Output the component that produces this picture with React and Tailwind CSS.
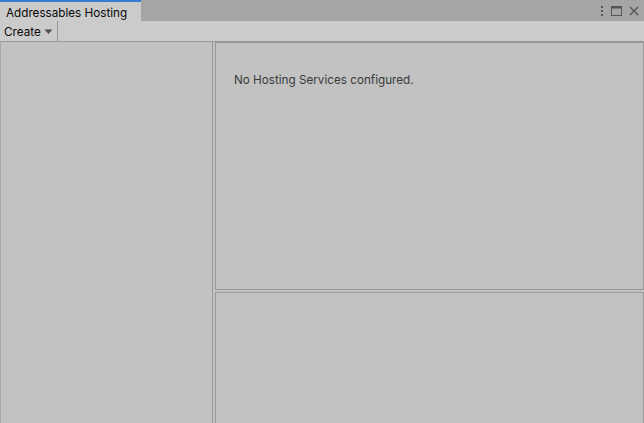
import React from "react";

export default function App() {
  return (
    <div
      className="w-[644px] h-[423px] flex flex-col bg-[#c2c2c2] overflow-hidden text-[11.7px]"
      style={{ fontFamily: "Inter, 'Noto Sans', sans-serif" }}
    >
      {/* Tab bar */}
      <div className="h-[21px] flex bg-[#a5a5a5] shrink-0">
        <div className="w-[141px] bg-[#cbcbcb] border-t-2 border-t-[#3a7cd2] flex items-center pl-[6px] text-[#090909] leading-none pt-[5px]">
          Addressables Hosting
        </div>
        <div className="flex-1" />
        <div className="flex items-center gap-[7px] pr-[5px] pt-[1px]">
          <svg width="4" height="12" viewBox="0 0 4 12">
            <rect x="1" y="1" width="2" height="2" fill="#555" />
            <rect x="1" y="5" width="2" height="2" fill="#555" />
            <rect x="1" y="9" width="2" height="2" fill="#555" />
          </svg>
          <svg width="11" height="10" viewBox="0 0 11 10">
            <rect x="0.5" y="0.5" width="10" height="9" fill="none" stroke="#555" />
            <rect x="0.5" y="0.5" width="10" height="2" fill="#555" />
          </svg>
          <svg width="10" height="10" viewBox="0 0 10 10">
            <path d="M1 1 L9 9 M9 1 L1 9" stroke="#555" strokeWidth="1.4" />
          </svg>
        </div>
      </div>
      {/* Toolbar */}
      <div className="h-[21px] flex bg-[#cbcbcb] border-b border-b-[#999999] shrink-0">
        <div className="w-[58px] border-r border-r-[#999999] flex items-center pl-[4px] gap-[3px] text-[#090909] leading-none pt-[3px]">
          <span>Create</span>
          <svg width="9" height="6" viewBox="0 0 9 6" className="-mt-[2px]">
            <path d="M0.5 0.5 L8.5 0.5 L4.5 5 Z" fill="#505050" />
          </svg>
        </div>
      </div>
      {/* Content */}
      <div className="flex-1 flex min-h-0">
        <div className="w-[213px] border-l border-l-[#a8a8a8] border-r border-r-[#999999] shrink-0" />
        <div className="flex-1 flex flex-col ml-[2px] min-w-0">
          <div className="h-[248px] border border-[#999999] shrink-0 pl-[18px] pt-[29px] text-[#3a3a3a]">
            No Hosting Services configured.
          </div>
          <div className="flex-1 mt-[2px] border border-[#999999] border-b-0" />
        </div>
      </div>
    </div>
  );
}
